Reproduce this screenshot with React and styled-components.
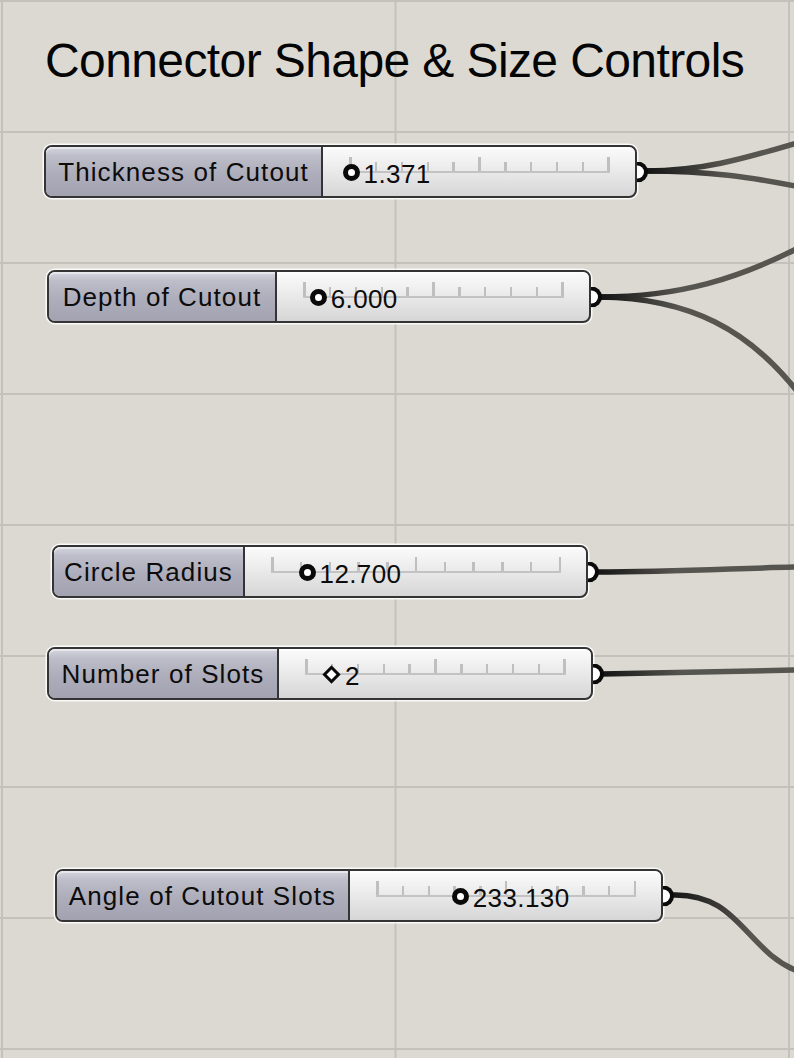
import React from "react";
import styled, { createGlobalStyle } from "styled-components";

const GlobalStyle = createGlobalStyle`
  html, body {
    margin: 0;
    padding: 0;
    background: #dcd9d3;
  }
  body {
    font-family: "Liberation Sans", Arial, sans-serif;
    overflow: hidden;
  }
`;

const sliders = [
  { name: "Thickness of Cutout", value: "1.371", left: 44, top: 145, width: 593, label: 277, pct: 1 },
  { name: "Depth of Cutout", value: "6.000", left: 47, top: 270, width: 544, label: 228, pct: 6 },
  { name: "Circle Radius", value: "12.700", left: 52, top: 545, width: 536, label: 191, pct: 12.6 },
  { name: "Number of Slots", value: "2", left: 47, top: 647, width: 546, label: 230, pct: 10.3, integer: true },
  { name: "Angle of Cutout Slots", value: "233.130", left: 55, top: 869, width: 608, label: 293, pct: 32.6 },
];

// start x is used for the dark fade near the output grip
const wires = [
  { x: 646, d: "M 646 171 C 700 171, 740 160, 800 142" },
  { x: 646, d: "M 646 171 C 710 171, 750 177, 800 187" },
  { x: 600, d: "M 600 297 C 680 297, 740 278, 800 247" },
  { x: 600, d: "M 600 297 C 690 298, 750 330, 800 395" },
  { x: 596, d: "M 596 572 C 680 572, 740 568, 800 567" },
  { x: 602, d: "M 602 674 C 680 673, 740 671, 800 670" },
  { x: 671, d: "M 671 895 C 740 892, 745 952, 800 972" },
];

export default function App() {
  return (
    <>
      <GlobalStyle />
      <Canvas>
        <Title>Connector Shape &amp; Size Controls</Title>
        <Wires width="794" height="1058" viewBox="0 0 794 1058">
          <defs>
            {wires.map((w, i) => (
              <linearGradient
                key={i}
                id={`wire${i}`}
                gradientUnits="userSpaceOnUse"
                x1={w.x}
                y1="0"
                x2={w.x + 80}
                y2="0"
              >
                <stop offset="0" stopColor="#141414" />
                <stop offset="0.35" stopColor="#2a2a28" />
                <stop offset="1" stopColor="#575550" />
              </linearGradient>
            ))}
          </defs>
          {wires.map((w, i) => (
            <path key={i} d={w.d} stroke={`url(#wire${i})`} strokeWidth="5.5" fill="none" />
          ))}
        </Wires>
        {sliders.map((s) => (
          <Slider
            key={s.name}
            style={{ left: s.left, top: s.top, width: s.width }}
          >
            <Label style={{ width: s.label }}>{s.name}</Label>
            <ValueArea>
              <Track>
                {Array.from({ length: 11 }).map((_, i) => (
                  <Tick key={i} $major={i % 5 === 0} />
                ))}
                <KnobGroup style={{ left: `${s.pct}%` }}>
                  {s.integer ? <Diamond /> : <Knob />}
                  <ValueText>{s.value}</ValueText>
                </KnobGroup>
              </Track>
            </ValueArea>
            <Port />
          </Slider>
        ))}
      </Canvas>
    </>
  );
}

const Canvas = styled.div`
  position: relative;
  width: 794px;
  height: 1058px;
  overflow: hidden;
  background-color: #dcd9d3;
  background-image: linear-gradient(to right, #c4c1bb 2px, transparent 2px),
    linear-gradient(to bottom, #c4c1bb 2px, transparent 2px);
  background-size: 393.5px 131px;
  background-position: 1px 0px;
`;

const Title = styled.div`
  position: absolute;
  left: 45px;
  top: 37px;
  font-size: 48px;
  line-height: 48px;
  letter-spacing: -0.6px;
  color: #050505;
  white-space: nowrap;
`;

const Wires = styled.svg`
  position: absolute;
  left: 0;
  top: 0;
  pointer-events: none;
`;

const Slider = styled.div`
  position: absolute;
  box-sizing: border-box;
  height: 53px;
  display: flex;
  border: 2px solid #343434;
  border-radius: 8px;
  box-shadow: 0 0 0 1.5px rgba(255, 255, 255, 0.85);
  background: linear-gradient(#fbfbfb, #ededed 40%, #d6d6d6);
`;

const Label = styled.div`
  box-sizing: border-box;
  flex: none;
  display: flex;
  align-items: center;
  justify-content: center;
  padding-top: 2px;
  border-right: 2px solid #343434;
  border-radius: 6px 0 0 6px;
  background: linear-gradient(#d6d6df 0%, #bebeca 18%, #adadbb 55%, #a2a2b1 100%);
  box-shadow: inset 0 2px 0 rgba(255, 255, 255, 0.45);
  font-size: 26px;
  letter-spacing: 1.1px;
  color: #0c0c0c;
  white-space: nowrap;
`;

const ValueArea = styled.div`
  flex: 1;
  display: flex;
  align-items: center;
  padding: 0 25px 0 26px;
  border-radius: 0 6px 6px 0;
  box-shadow: inset 0 2px 0 rgba(255, 255, 255, 0.7);
`;

const Track = styled.div`
  position: relative;
  flex: 1;
  height: 14px;
  margin-bottom: 14px;
  display: flex;
  justify-content: space-between;
  align-items: flex-end;
  border-bottom: 2px solid #c3c3c3;
`;

const Tick = styled.div`
  width: 2.5px;
  height: ${(p) => (p.$major ? "14px" : "9px")};
  background: #bfbfbf;
`;

const KnobGroup = styled.div`
  position: absolute;
  top: 16px;
  display: flex;
  align-items: center;
  gap: 4px;
  transform: translate(-9px, -50%);
`;

const Knob = styled.div`
  box-sizing: border-box;
  width: 17px;
  height: 17px;
  border-radius: 50%;
  border: 5.5px solid #0a0a0a;
  background: #fff;
`;

const Diamond = styled.div`
  box-sizing: border-box;
  width: 13px;
  height: 13px;
  margin: 0 3px 0 2px;
  transform: rotate(45deg);
  border: 3.5px solid #0a0a0a;
  background: #fff;
`;

const ValueText = styled.span`
  font-size: 26px;
  letter-spacing: 0.4px;
  line-height: 26px;
  padding-top: 2px;
  color: #0c0c0c;
  white-space: nowrap;
`;

const Port = styled.div`
  position: absolute;
  right: -13px;
  top: 50%;
  transform: translateY(-50%);
  box-sizing: border-box;
  width: 11px;
  height: 21px;
  border: 4.5px solid #0a0a0a;
  border-left: none;
  border-radius: 0 11px 11px 0;
  background: #fff;
`;
